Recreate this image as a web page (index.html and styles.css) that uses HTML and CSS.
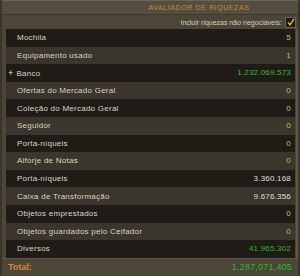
FILE: index.html
```html
<!DOCTYPE html>
<html lang="pt">
  <head>
    <meta charset="UTF-8" />
    <title>Avaliador de Riquezas</title>
    <link rel="stylesheet" href="styles.css">
  </head>
  <body>
    <div class="window">
      <!-- Title -->
      <div class="title-bar">
        <span class="title">AVALIADOR DE RIQUEZAS</span>
      </div>

      <!-- Option -->
      <div class="option-row">
        <span class="option-label">Incluir riquezas não negociáveis:</span>
        <span class="checkbox">
          <svg width="8" height="8" viewBox="0 0 8 8">
            <path d="M1 4.5 L3 6.8 L7 1" fill="none" stroke="#e0b040" stroke-width="1.4" />
          </svg>
        </span>
      </div>

      <!-- Wealth list -->
      <div class="list-wrap">
        <ul class="list">
          <li class="row dark"><span class="name">Mochila</span><span class="value yellow">5</span></li>
          <li class="row light"><span class="name">Equipamento usado</span><span class="value yellow">1</span></li>
          <li class="row dark"><span class="name"><span class="plus">+</span>Banco</span><span class="value green">1.232.069.573</span></li>
          <li class="row light"><span class="name">Ofertas do Mercado Geral</span><span class="value yellow">0</span></li>
          <li class="row dark"><span class="name">Coleção do Mercado Geral</span><span class="value yellow">0</span></li>
          <li class="row light"><span class="name">Seguidor</span><span class="value yellow">0</span></li>
          <li class="row dark"><span class="name">Porta-níqueis</span><span class="value yellow">0</span></li>
          <li class="row light"><span class="name">Alforje de Notas</span><span class="value yellow">0</span></li>
          <li class="row dark"><span class="name">Porta-níqueis</span><span class="value white">3.360.168</span></li>
          <li class="row light"><span class="name">Caixa de Transformação</span><span class="value white">9.676.356</span></li>
          <li class="row dark"><span class="name">Objetos emprestados</span><span class="value yellow">0</span></li>
          <li class="row light"><span class="name">Objetos guardados pelo Ceifador</span><span class="value yellow">0</span></li>
          <li class="row dark"><span class="name">Diversos</span><span class="value green">41.965.302</span></li>
        </ul>
        <div class="scroll-track"></div>
      </div>

      <!-- Total -->
      <div class="total-row">
        <span class="total-label">Total:</span>
        <span class="value green">1,287,071,405</span>
      </div>
    </div>
  </body>
</html>
```

FILE: styles.css
```css
/* Global */
body {
  margin: 0;
  background: #4a4537;
  font-family: "Liberation Sans", Arial, sans-serif;
}

.window {
  width: 300px;
  height: 276px;
  box-sizing: border-box;
  background: #4b4638;
  border-left: 2px solid #3a3529;
  border-right: 2px solid #3a3529;
  display: flex;
  flex-direction: column;
  overflow: hidden;
}

/* Title */
.title-bar {
  height: 13px;
  background: #544e40;
  border-top: 1px solid #6a6452;
  border-bottom: 1px solid #3e392e;
  display: flex;
  align-items: center;
  justify-content: center;
  padding-left: 98px;
}

.title {
  color: #c98a35;
  font-size: 7px;
  letter-spacing: 0.6px;
}

/* Option */
.option-row {
  height: 14px;
  display: flex;
  align-items: center;
  justify-content: flex-end;
  gap: 3px;
  padding-right: 2px;
}

.option-label {
  color: #d6cdb4;
  font-size: 7px;
}

.checkbox {
  width: 9px;
  height: 9px;
  background: #1c1a16;
  border: 1px solid #6a6452;
  display: flex;
  align-items: center;
  justify-content: center;
}

/* List */
.list-wrap {
  display: flex;
  padding-left: 4px;
}

.list {
  list-style: none;
  margin: 0;
  padding: 0;
  width: 289px;
}

.row {
  height: 17.6px;
  display: flex;
  align-items: center;
  justify-content: space-between;
  padding: 0 4px 0 11px;
  font-size: 8px;
  letter-spacing: 0.25px;
  color: #ddd4bb;
}

.row.dark {
  background: #1f1c18;
}

.row.light {
  background: #3a352d;
}

.plus {
  margin-left: -9px;
  margin-right: 3px;
  color: #e6dfcc;
  font-size: 9px;
}

.scroll-track {
  width: 2px;
  margin-left: 1px;
  background: #5e5849;
}

.value {
  font-size: 8px;
  letter-spacing: 0.2px;
}

.yellow {
  color: #c9c248;
}

.green {
  color: #2eb82e;
}

.white {
  color: #e2ddd2;
}

/* Total */
.total-row {
  flex: 1;
  display: flex;
  align-items: center;
  justify-content: space-between;
  padding: 0 6px 0 6px;
  border-top: 1px solid #5d5748;
}

.total-label {
  color: #d9862c;
  font-size: 9px;
  font-weight: bold;
}

.total-row .value {
  font-size: 9px;
}
```
